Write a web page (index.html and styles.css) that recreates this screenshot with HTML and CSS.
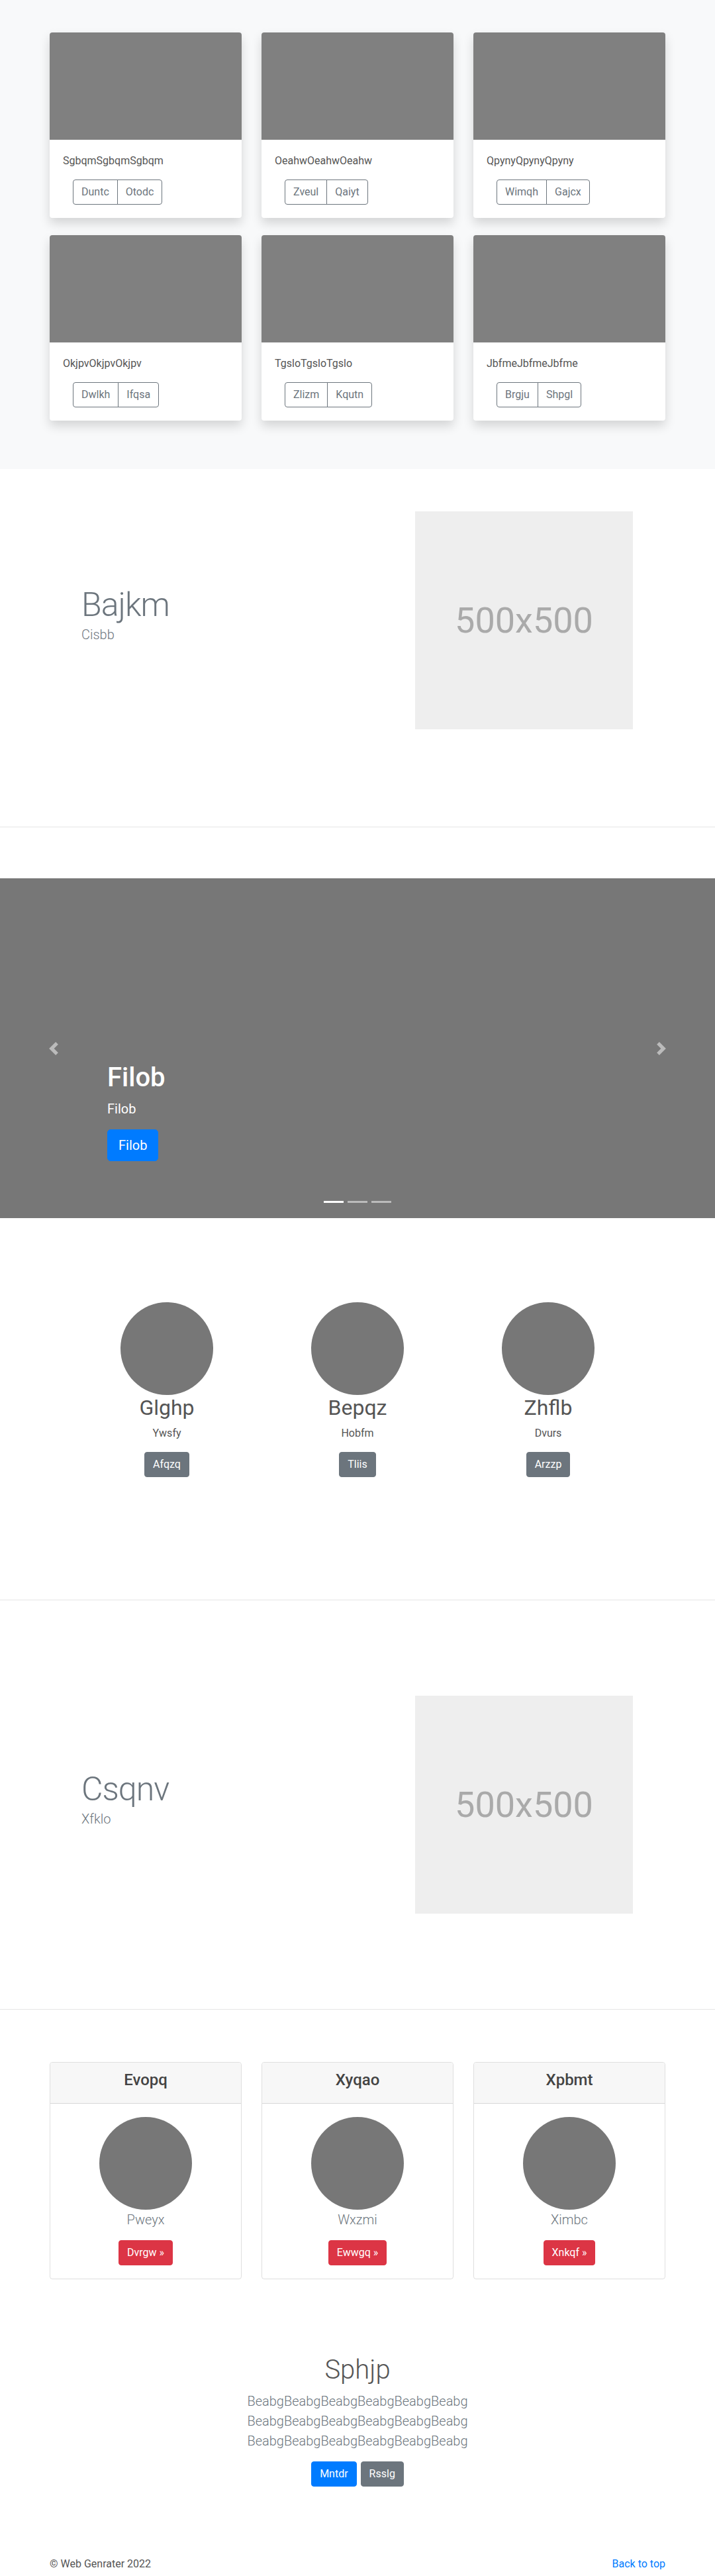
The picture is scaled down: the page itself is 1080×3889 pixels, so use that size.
FILE: index.html
```html
<!DOCTYPE html>
<html lang="en">
<head>
<meta charset="utf-8">
<title>Web Genrater</title>
<link rel="stylesheet" href="styles.css">
</head>
<body>
<main>
  <section class="album">
    <div class="container album-grid">
      <div class="album-card">
        <div class="album-img"></div>
        <div class="album-body">
          <p class="album-text">SgbqmSgbqmSgbqm</p>
          <div class="btn-group"><a class="btn btn-outline" href="#">Duntc</a><a class="btn btn-outline" href="#">Otodc</a></div>
        </div>
      </div>
      <div class="album-card">
        <div class="album-img"></div>
        <div class="album-body">
          <p class="album-text">OeahwOeahwOeahw</p>
          <div class="btn-group"><a class="btn btn-outline" href="#">Zveul</a><a class="btn btn-outline" href="#">Qaiyt</a></div>
        </div>
      </div>
      <div class="album-card">
        <div class="album-img"></div>
        <div class="album-body">
          <p class="album-text">QpynyQpynyQpyny</p>
          <div class="btn-group"><a class="btn btn-outline" href="#">Wimqh</a><a class="btn btn-outline" href="#">Gajcx</a></div>
        </div>
      </div>
      <div class="album-card">
        <div class="album-img"></div>
        <div class="album-body">
          <p class="album-text">OkjpvOkjpvOkjpv</p>
          <div class="btn-group"><a class="btn btn-outline" href="#">Dwlkh</a><a class="btn btn-outline" href="#">Ifqsa</a></div>
        </div>
      </div>
      <div class="album-card">
        <div class="album-img"></div>
        <div class="album-body">
          <p class="album-text">TgsloTgsloTgslo</p>
          <div class="btn-group"><a class="btn btn-outline" href="#">Zlizm</a><a class="btn btn-outline" href="#">Kqutn</a></div>
        </div>
      </div>
      <div class="album-card">
        <div class="album-img"></div>
        <div class="album-body">
          <p class="album-text">JbfmeJbfmeJbfme</p>
          <div class="btn-group"><a class="btn btn-outline" href="#">Brgju</a><a class="btn btn-outline" href="#">Shpgl</a></div>
        </div>
      </div>
    </div>
  </section>

  <section class="feature feature-first">
    <div class="container feature-row">
      <div class="feature-text">
        <h2 class="display">Bajkm</h2>
        <p class="lead muted">Cisbb</p>
      </div>
      <div class="placeholder">500x500</div>
    </div>
  </section>

  <section class="carousel">
    <div class="carousel-caption">
      <h1 class="caption-title">Filob</h1>
      <p class="caption-text">Filob</p>
      <div class="caption-actions"><a class="btn btn-lg btn-primary" href="#">Filob</a></div>
    </div>
    <a class="carousel-control control-prev" href="#" aria-label="Previous">
      <svg width="20" height="20" viewBox="0 0 8 8"><path fill="#fff" d="M5.25 0l-4 4 4 4 1.5-1.5L4.25 4l2.5-2.5L5.25 0z"/></svg>
    </a>
    <a class="carousel-control control-next" href="#" aria-label="Next">
      <svg width="20" height="20" viewBox="0 0 8 8"><path fill="#fff" d="M2.75 0l-1.5 1.5L3.75 4l-2.5 2.5L2.75 8l4-4-4-4z"/></svg>
    </a>
    <ol class="indicators">
      <li class="active"></li>
      <li></li>
      <li></li>
    </ol>
  </section>

  <section class="marketing">
    <div class="marketing-row">
      <div class="marketing-col">
        <div class="circle"></div>
        <h2 class="marketing-title">Glghp</h2>
        <p class="marketing-text">Ywsfy</p>
        <a class="btn btn-secondary" href="#">Afqzq</a>
      </div>
      <div class="marketing-col">
        <div class="circle"></div>
        <h2 class="marketing-title">Bepqz</h2>
        <p class="marketing-text">Hobfm</p>
        <a class="btn btn-secondary" href="#">Tliis</a>
      </div>
      <div class="marketing-col">
        <div class="circle"></div>
        <h2 class="marketing-title">Zhflb</h2>
        <p class="marketing-text">Dvurs</p>
        <a class="btn btn-secondary" href="#">Arzzp</a>
      </div>
    </div>
  </section>

  <section class="feature feature-second">
    <div class="container feature-row">
      <div class="feature-text">
        <h2 class="display">Csqnv</h2>
        <p class="lead muted">Xfklo</p>
      </div>
      <div class="placeholder">500x500</div>
    </div>
  </section>

  <section class="pricing">
    <div class="container pricing-grid">
      <div class="price-card">
        <div class="price-header"><h4>Evopq</h4></div>
        <div class="price-body">
          <div class="circle"></div>
          <p class="lead muted">Pweyx</p>
          <a class="btn btn-danger" href="#">Dvrgw »</a>
        </div>
      </div>
      <div class="price-card">
        <div class="price-header"><h4>Xyqao</h4></div>
        <div class="price-body">
          <div class="circle"></div>
          <p class="lead muted">Wxzmi</p>
          <a class="btn btn-danger" href="#">Ewwgq »</a>
        </div>
      </div>
      <div class="price-card">
        <div class="price-header"><h4>Xpbmt</h4></div>
        <div class="price-body">
          <div class="circle"></div>
          <p class="lead muted">Ximbc</p>
          <a class="btn btn-danger" href="#">Xnkqf »</a>
        </div>
      </div>
    </div>
  </section>

  <section class="jumbo">
    <h1 class="jumbo-title">Sphjp</h1>
    <p class="lead muted jumbo-text">BeabgBeabgBeabgBeabgBeabgBeabg BeabgBeabgBeabgBeabgBeabgBeabg BeabgBeabgBeabgBeabgBeabgBeabg</p>
    <div class="jumbo-actions">
      <a class="btn btn-primary" href="#">Mntdr</a>
      <a class="btn btn-secondary" href="#">Rsslg</a>
    </div>
  </section>
</main>

<footer class="container footer">
  <p class="footer-copy">© Web Genrater 2022</p>
  <a class="footer-link" href="#">Back to top</a>
</footer>
</body>
</html>
```

FILE: styles.css
```css
* {
  box-sizing: border-box;
}

html,
body {
  margin: 0;
  padding: 0;
}

body {
  font-family: "Segoe UI", Roboto, "Noto Sans", "Liberation Sans", sans-serif;
  font-size: 16px;
  line-height: 1.5;
  color: #555;
  background: #fff;
}

h1, h2, h3, h4, p, ol {
  margin: 0;
  padding: 0;
}

.container {
  width: 930px;
  margin: 0 auto;
}

/* Buttons */
.btn {
  display: inline-block;
  font-size: 16px;
  line-height: 24px;
  padding: 6px 12px;
  border: 1px solid transparent;
  border-radius: 4px;
  text-decoration: none;
  text-align: center;
  white-space: nowrap;
}

.btn-lg {
  font-size: 20px;
  line-height: 30px;
  padding: 8px 16px;
  border-radius: 5px;
}

.btn-outline {
  color: #6c757d;
  border-color: #6c757d;
  background: transparent;
}

.btn-primary {
  color: #fff;
  background: #007bff;
  border-color: #007bff;
}

.btn-secondary {
  color: #fff;
  background: #6c757d;
  border-color: #6c757d;
}

.btn-danger {
  color: #fff;
  background: #dc3545;
  border-color: #dc3545;
}

.btn-group {
  display: inline-flex;
  margin-left: 15px;
}

.btn-group .btn:first-child {
  border-top-right-radius: 0;
  border-bottom-right-radius: 0;
}

.btn-group .btn + .btn {
  margin-left: -1px;
  border-top-left-radius: 0;
  border-bottom-left-radius: 0;
}

.lead {
  font-size: 20px;
  font-weight: 300;
  line-height: 30px;
}

.muted {
  color: #6c757d;
}

/* Album */
.album {
  background: #f8f9fa;
  padding: 49px 0 73px;
}

.album-grid {
  display: grid;
  grid-template-columns: repeat(3, 1fr);
  column-gap: 30px;
  row-gap: 26px;
}

.album-card {
  background: #fff;
  border-radius: 4px;
  overflow: hidden;
  box-shadow: 0 8px 16px rgba(0, 0, 0, 0.15);
}

.album-img {
  height: 162px;
  background: #808080;
}

.album-body {
  padding: 20px;
}

.album-text {
  margin-bottom: 16px;
}

/* Feature */
.feature {
  border-bottom: 1px solid #e5e5e5;
}

.feature-first {
  padding: 64px 0 147px;
}

.feature-second {
  padding: 144px 0 144px;
}

.feature-row {
  display: flex;
  justify-content: space-between;
  align-items: flex-start;
  padding: 0 49px 0 48px;
}

.feature-text {
  padding-top: 111px;
}

.display {
  font-size: 50px;
  font-weight: 300;
  line-height: 60px;
  letter-spacing: -1px;
  color: #6c757d;
}

.placeholder {
  width: 329px;
  height: 329px;
  background: #eee;
  color: #aaa;
  display: flex;
  align-items: center;
  justify-content: center;
  font-size: 54px;
}

/* Carousel */
.carousel {
  position: relative;
  margin-top: 77px;
  height: 513px;
  background: #777;
  overflow: hidden;
}

.carousel-caption {
  position: absolute;
  left: 15%;
  right: 15%;
  bottom: 50px;
  padding: 20px 0;
  color: #fff;
  z-index: 2;
}

.caption-title {
  font-size: 40px;
  font-weight: 500;
  line-height: 1.2;
  margin-bottom: 8px;
}

.caption-text {
  font-size: 20px;
  line-height: 30px;
  margin-bottom: 16px;
}

.caption-actions {
  display: flex;
  margin-bottom: 16px;
}

.carousel-control {
  position: absolute;
  top: 0;
  bottom: 0;
  width: 15%;
  display: flex;
  align-items: center;
  justify-content: center;
  opacity: 0.5;
}

.control-prev {
  left: 0;
}

.control-next {
  right: 0;
}

.indicators {
  position: absolute;
  left: 0;
  right: 0;
  bottom: 23px;
  display: flex;
  justify-content: center;
  gap: 6px;
  list-style: none;
}

.indicators li {
  width: 30px;
  height: 3px;
  background: #fff;
  opacity: 0.5;
}

.indicators li.active {
  opacity: 1;
}

/* Marketing */
.marketing {
  padding: 127px 0 185px;
  border-bottom: 1px solid #e5e5e5;
}

.marketing-row {
  width: 864px;
  margin: 0 auto;
  display: grid;
  grid-template-columns: repeat(3, 1fr);
}

.marketing-col {
  text-align: center;
}

.circle {
  width: 140px;
  height: 140px;
  border-radius: 50%;
  background: #777;
  margin: 0 auto;
}

.marketing-title {
  font-size: 32px;
  font-weight: 400;
  line-height: 1.2;
  margin-bottom: 8px;
}

.marketing-text {
  margin-bottom: 16px;
}

/* Pricing */
.pricing {
  padding-top: 79px;
}

.pricing-grid {
  display: grid;
  grid-template-columns: repeat(3, 1fr);
  column-gap: 30px;
}

.price-card {
  border: 1px solid rgba(0, 0, 0, 0.125);
  border-radius: 4px;
  text-align: center;
  overflow: hidden;
}

.price-header {
  background: #f7f7f7;
  border-bottom: 1px solid rgba(0, 0, 0, 0.125);
  padding: 12px 20px;
}

.price-header h4 {
  font-size: 24px;
  font-weight: 500;
  line-height: 1.2;
  margin-bottom: 8px;
  color: #444;
}

.price-body {
  padding: 20px;
}

.price-body .lead {
  margin-bottom: 16px;
}

/* Jumbotron */
.jumbo {
  padding-top: 113px;
  text-align: center;
}

.jumbo-title {
  font-size: 40px;
  font-weight: 300;
  line-height: 1.2;
  margin-bottom: 8px;
}

.jumbo-text {
  width: 450px;
  margin: 0 auto 16px;
}

.jumbo-actions {
  display: flex;
  justify-content: center;
  gap: 6px;
  margin-top: 6px;
}

/* Footer */
.footer {
  display: flex;
  justify-content: space-between;
  align-items: flex-start;
  margin-top: 105px;
}

.footer-copy {
  color: #555;
}

.footer-link {
  color: #007bff;
  text-decoration: none;
}
```
